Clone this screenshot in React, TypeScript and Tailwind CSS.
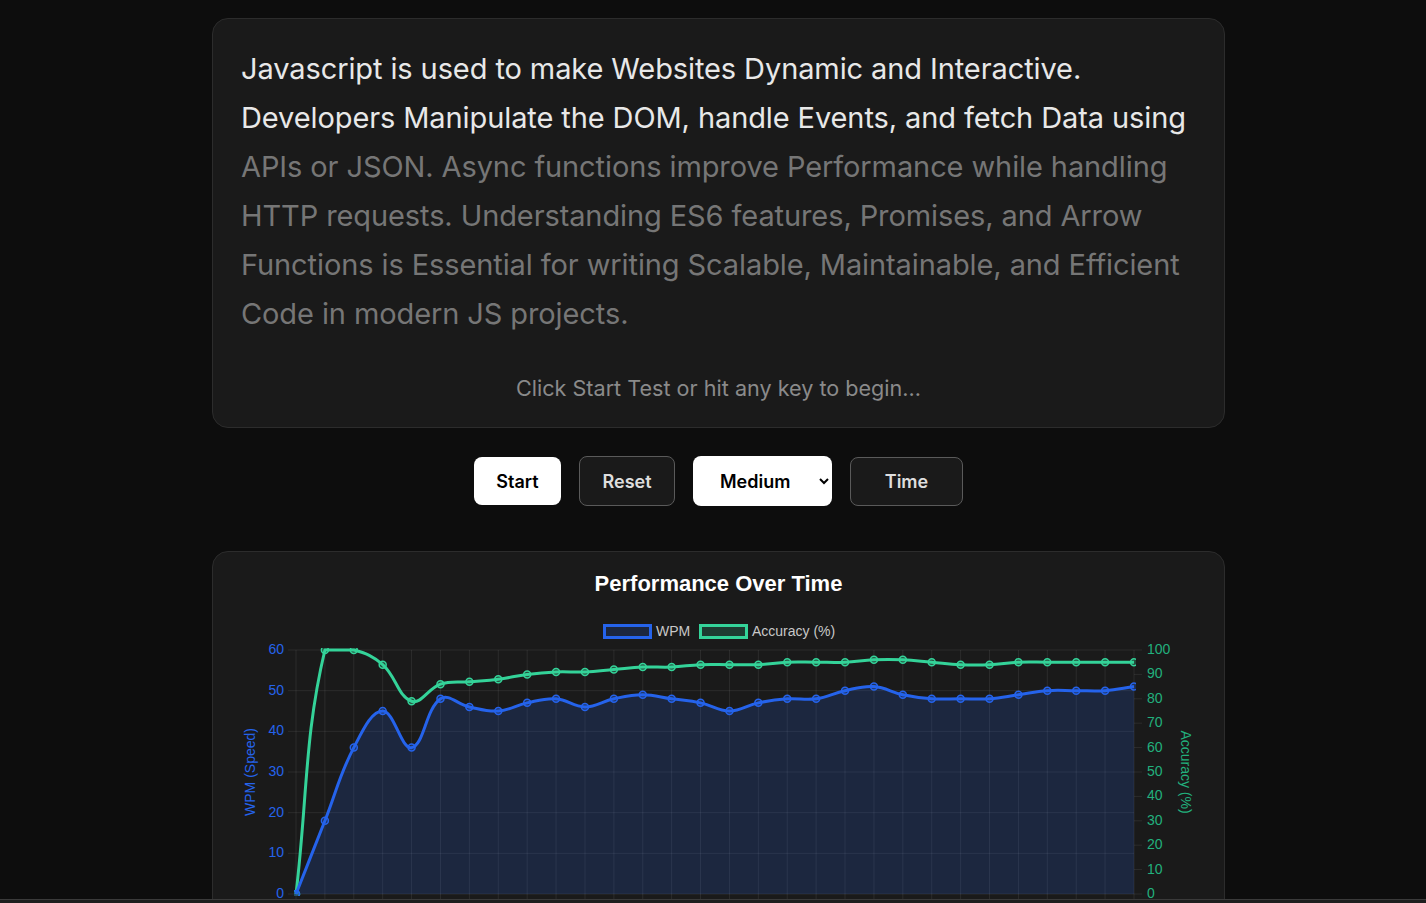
import React from 'react';

// chart data
const wpm = [0, 18, 36, 45, 36, 48, 46, 45, 47, 48, 46, 48, 49, 48, 47, 45, 47, 48, 48, 50, 51, 49, 48, 48, 48, 49, 50, 50, 50, 51];
const acc = [0, 100, 100, 94, 79, 86, 87, 88, 90, 91, 91, 92, 93, 93, 94, 94, 94, 95, 95, 95, 96, 96, 95, 94, 94, 95, 95, 95, 95, 95];

const area = { left: 83, right: 921, top: 50, bottom: 294 };

type P = { x: number; y: number };

const xAt = (i: number) => area.left + (i * (area.right - area.left)) / (wpm.length - 1);
const yWpm = (v: number) => area.bottom - (v / 60) * (area.bottom - area.top);
const yAcc = (v: number) => area.bottom - (v / 100) * (area.bottom - area.top);

const clamp = (v: number, a: number, b: number) => Math.min(Math.max(v, a), b);

// same idea as chart.js tension curves
function splinePath(pts: P[], t = 0.4) {
  const cps = pts.map((cur, i) => {
    const prev = pts[i - 1] ?? cur;
    const next = pts[i + 1] ?? cur;
    const d01 = Math.hypot(cur.x - prev.x, cur.y - prev.y);
    const d12 = Math.hypot(next.x - cur.x, next.y - cur.y);
    let s01 = d01 / (d01 + d12);
    let s12 = d12 / (d01 + d12);
    s01 = isNaN(s01) ? 0 : s01;
    s12 = isNaN(s12) ? 0 : s12;
    const fa = t * s01;
    const fb = t * s12;
    const cap = (p: P) => ({ x: clamp(p.x, area.left, area.right), y: clamp(p.y, area.top, area.bottom) });
    return {
      c1: cap({ x: cur.x - fa * (next.x - prev.x), y: cur.y - fa * (next.y - prev.y) }),
      c2: cap({ x: cur.x + fb * (next.x - prev.x), y: cur.y + fb * (next.y - prev.y) }),
    };
  });
  let d = `M${pts[0].x},${pts[0].y}`;
  for (let i = 1; i < pts.length; i++) {
    d += ` C${cps[i - 1].c2.x},${cps[i - 1].c2.y} ${cps[i].c1.x},${cps[i].c1.y} ${pts[i].x},${pts[i].y}`;
  }
  return d;
}

const wpmPts = wpm.map((v, i) => ({ x: xAt(i), y: yWpm(v) }));
const accPts = acc.map((v, i) => ({ x: xAt(i), y: yAcc(v) }));
const wpmLine = splinePath(wpmPts);
const accLine = splinePath(accPts);
const wpmFill = `${wpmLine} L${area.right},${area.bottom} L${area.left},${area.bottom} Z`;

const BLUE = '#2563eb';
const GREEN = '#34d399';

const PerformanceChart = () => {
  const grid = 'rgba(255,255,255,0.08)';
  return (
    <svg width={1011} height={310} className="block" style={{ fontFamily: '"Liberation Sans", Arial, sans-serif' }}>
      <defs>
        <clipPath id="chartArea">
          <rect x={area.left - 2} y={area.top - 2} width={area.right - area.left + 4} height={area.bottom - area.top + 4} />
        </clipPath>
      </defs>

      {/* legend */}
      <rect x={391.5} y={25.5} width={46} height={12} fill="rgba(37,99,235,0.18)" stroke={BLUE} strokeWidth={3} />
      <text x={443} y={36} fontSize={14} fill="#c8c8c8">WPM</text>
      <rect x={487.5} y={25.5} width={46} height={12} fill="rgba(52,211,153,0.18)" stroke={GREEN} strokeWidth={3} />
      <text x={539} y={36} fontSize={14} fill="#c8c8c8">Accuracy (%)</text>

      {/* grid */}
      {wpm.map((_, i) => (
        <line key={'v' + i} x1={xAt(i)} x2={xAt(i)} y1={area.top} y2={area.bottom + 8} stroke={grid} strokeWidth={1} />
      ))}
      {[0, 10, 20, 30, 40, 50, 60].map((v) => (
        <g key={'h' + v}>
          <line x1={area.left - 8} x2={area.right} y1={yWpm(v)} y2={yWpm(v)} stroke={grid} strokeWidth={1} />
          <text x={71} y={yWpm(v) + 4} fontSize={14} fill={BLUE} textAnchor="end">{v}</text>
        </g>
      ))}
      {[0, 10, 20, 30, 40, 50, 60, 70, 80, 90, 100].map((v) => (
        <g key={'r' + v}>
          <line x1={area.right} x2={area.right + 8} y1={yAcc(v)} y2={yAcc(v)} stroke={grid} strokeWidth={1} />
          <text x={934} y={yAcc(v) + 4} fontSize={14} fill="#22b07d">{v}</text>
        </g>
      ))}

      {/* axis titles */}
      <text x={38} y={172} fontSize={14} fill={BLUE} textAnchor="middle" transform="rotate(-90 38 172)" dominantBaseline="middle">WPM (Speed)</text>
      <text x={972} y={172} fontSize={14} fill="#22b07d" textAnchor="middle" transform="rotate(90 972 172)" dominantBaseline="middle">Accuracy (%)</text>

      <g clipPath="url(#chartArea)">
        <path d={wpmFill} fill="rgba(37,99,235,0.18)" />
        <path d={accLine} fill="none" stroke={GREEN} strokeWidth={3} strokeLinejoin="round" />
        {accPts.map((p, i) => (
          <circle key={'a' + i} cx={p.x} cy={p.y} r={3.5} fill="rgba(52,211,153,0.25)" stroke={GREEN} strokeWidth={1.5} />
        ))}
        <path d={wpmLine} fill="none" stroke={BLUE} strokeWidth={3} strokeLinejoin="round" />
        {wpmPts.map((p, i) => (
          <circle key={'w' + i} cx={p.x} cy={p.y} r={3.5} fill="rgba(37,99,235,0.25)" stroke={BLUE} strokeWidth={1.5} />
        ))}
      </g>
    </svg>
  );
};

export default function App() {
  return (
    <div className="min-h-screen bg-[#0d0d0d] pl-[11px] pt-[18px] pb-16 font-['Inter',sans-serif]">
      <div className="mx-auto w-[1013px]">
        {/* typing area */}
        <div className="rounded-2xl border border-[#2c2c2c] bg-[#1a1a1a] px-7 pt-[25px] pb-[25px]">
          <p className="text-[29px] leading-[49px] tracking-[-0.1px]">
            <span className="text-[#e8e8e8]">
              Javascript is used to make Websites Dynamic and Interactive. Developers Manipulate the DOM, handle Events, and fetch Data using{' '}
            </span>
            <span className="text-[#767676]">
              APIs or JSON. Async functions improve Performance while handling HTTP requests. Understanding ES6 features, Promises, and Arrow Functions is Essential for writing Scalable, Maintainable, and Efficient Code in modern JS projects.
            </span>
          </p>
          <p className="mt-[36px] text-center text-[21.6px] leading-[28px] text-[#8a8a8a]">
            Click Start Test or hit any key to begin...
          </p>
        </div>

        {/* controls */}
        <div className="mt-[28px] flex items-center justify-center gap-[18px]">
          <button className="h-[48px] w-[87px] rounded-lg bg-white text-[18px] font-semibold text-black">
            Start
          </button>
          <button className="h-[50px] w-[96px] rounded-lg border border-[#5a5a5a] bg-[#1a1a1a] text-[18px] font-semibold text-[#dedede]">
            Reset
          </button>
          <select
            defaultValue="medium"
            className="h-[50px] w-[139px] rounded-lg bg-white pl-[23px] pr-[8px] text-[18px] font-semibold text-black outline-none"
          >
            <option value="easy">Easy</option>
            <option value="medium">Medium</option>
            <option value="hard">Hard</option>
          </select>
          <button className="h-[49px] w-[113px] rounded-lg border border-[#5a5a5a] bg-[#1a1a1a] text-[18px] font-semibold text-[#dedede]">
            Time
          </button>
        </div>

        {/* chart */}
        <div className="mt-[45px] rounded-2xl border border-[#2c2c2c] bg-[#1a1a1a] pt-[17px] pb-6">
          <h3 className="text-center font-['Liberation_Sans',Arial,sans-serif] text-[22px] leading-[29px] font-bold text-white">
            Performance Over Time
          </h3>
          <div className="mt-[2px]">
            <PerformanceChart />
          </div>
        </div>
      </div>

      {/* bottom strip */}
      <div className="fixed inset-x-0 bottom-0 h-[4px] border-t border-[#3a3a3a] bg-[#1e1e1e]" />
    </div>
  );
}
